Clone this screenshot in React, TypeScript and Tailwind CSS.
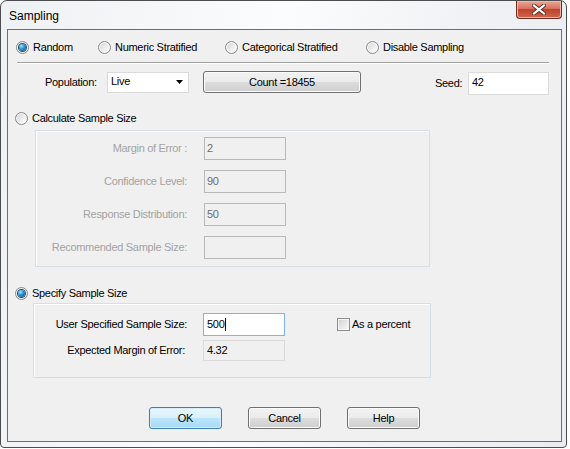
import React from 'react'

const font = "font-['Liberation_Sans',Arial,sans-serif]"

function Radio({ checked = false }: { checked?: boolean }) {
  return (
    <span className="flex h-[13px] w-[13px] shrink-0 items-center justify-center rounded-full border border-[#8a8a8a] bg-[linear-gradient(135deg,#d4d4d4,#f4f4f4_70%,#ffffff)] shadow-[inset_0_0_0_1px_#f8f8f8]">
      {checked && (
        <span className="h-[7px] w-[7px] rounded-full bg-[radial-gradient(circle_at_35%_30%,#9be3ff,#2a8fcf_45%,#0c4a78)] shadow-[0_0_0_1px_#1d4f74]" />
      )}
    </span>
  )
}

function RadioItem({ label, checked, w }: { label: string; checked?: boolean; w?: string }) {
  return (
    <div className={`flex h-[16px] items-center gap-[4px] ${w ?? ''}`}>
      <Radio checked={checked} />
      <span className="whitespace-nowrap">{label}</span>
    </div>
  )
}

function DisabledRow({ label, value }: { label: string; value: string }) {
  return (
    <div className="flex h-[23px] items-center">
      <span className="w-[152px] pr-[1px] text-right text-[#a3a3a3]">{label}</span>
      <div className="ml-[16px] flex h-[23px] w-[82px] items-start border border-[#b9b9b9] bg-[#f0f0f0] px-[2px] pt-[2px] text-[#6d6d6d]">
        {value}
      </div>
    </div>
  )
}

function WinButton({ label, primary }: { label: string; primary?: boolean }) {
  return (
    <button
      className={`flex h-[22px] w-[73px] items-center justify-center rounded-[3px] border ${
        primary
          ? 'border-[#3c7fb1] bg-[linear-gradient(#eaf6fd,#d9f0fc_50%,#bee6fd_50%,#a7d9f5)] shadow-[inset_0_0_0_1px_#d6eefb]'
          : 'border-[#707070] bg-[linear-gradient(#f2f2f2,#ebebeb_50%,#dddddd_50%,#cfcfcf)] shadow-[inset_0_0_0_1px_#fbfbfb]'
      }`}
    >
      {label}
    </button>
  )
}

export default function App() {
  return (
    <div className={`h-[449px] w-[570px] bg-white ${font} text-[11px] tracking-[-0.3px] text-black`}>
      <div className="flex h-[448px] w-[567px] flex-col rounded-t-[7px] rounded-b-[4px] border border-[#4d4d4d] bg-[linear-gradient(100deg,#eef1f4,#fbfcfd_45%,#f1f3f6_70%,#e9edf1)]">
        {/* title bar */}
        <div className="flex h-[28px] items-start justify-between">
          <span className="ml-[8px] mt-[6px] text-[12px] tracking-normal">Sampling</span>
          <div className="mr-[4px] flex h-[18px] w-[46px] items-center justify-center rounded-b-[4px] border border-t-0 border-[#6b2a20] bg-[linear-gradient(#e9a899,#d8705c_45%,#c0432c_50%,#d0654a)] shadow-[inset_0_0_0_1px_#f0b8a8]">
            <svg width="14" height="11" viewBox="0 0 14 11">
              <path d="M2 1.5 L12 9.5 M12 1.5 L2 9.5" stroke="#5a2a20" strokeWidth="4" strokeLinecap="square" />
              <path d="M2 1.5 L12 9.5 M12 1.5 L2 9.5" stroke="#ffffff" strokeWidth="2.2" strokeLinecap="square" />
            </svg>
          </div>
        </div>

        {/* client area */}
        <div className="ml-[6px] flex h-[413px] w-[555px] flex-col border border-[#6e6e6e] bg-[#f0f0f0]">
          {/* sampling method radios */}
          <div className="flex pl-[8px] pt-[9px]">
            <RadioItem label="Random" checked w="w-[82px]" />
            <RadioItem label="Numeric Stratified" w="w-[127px]" />
            <RadioItem label="Categorical Stratified" w="w-[141px]" />
            <RadioItem label="Disable Sampling" />
          </div>

          <div className="ml-[9px] mr-[12px] mt-[7px] border-t border-b border-t-[#a0a0a0] border-b-white" />

          {/* population row */}
          <div className="mt-[6px] flex h-[24px] items-center pl-[37px]">
            <span className="w-[62px]">Population:</span>
            <div className="flex h-[21px] w-[82px] items-center justify-between border border-[#dadada] bg-white pl-[3px] pr-[5px]">
              <span className="-mt-[2px]">Live</span>
              <svg width="7" height="4" viewBox="0 0 7 4">
                <path d="M0 0 H7 L3.5 4 Z" fill="#000" />
              </svg>
            </div>
            <div className="ml-[14px]">
              <button className="flex h-[22px] w-[158px] items-center justify-center rounded-[3px] border border-[#707070] bg-[linear-gradient(#f2f2f2,#ebebeb_50%,#dddddd_50%,#cfcfcf)] shadow-[inset_0_0_0_1px_#fbfbfb]">
                Count =18455
              </button>
            </div>
            <span className="ml-[74px] w-[33px] pt-[2px]">Seed:</span>
            <div className="mt-[2px] flex h-[23px] w-[81px] items-start border border-[#dcdcdc] bg-white px-[3px] pt-[1px]">
              42
            </div>
          </div>

          {/* calculate sample size */}
          <div className="mt-[16px] pl-[7px]">
            <RadioItem label="Calculate Sample Size" />
          </div>
          <div className="ml-[27px] mt-[4px] flex h-[137px] w-[395px] flex-col gap-[10px] border border-[#d5dfe5] pt-[6px] shadow-[inset_1px_1px_0_#ffffff]">
            <DisabledRow label="Margin of Error :" value="2" />
            <DisabledRow label="Confidence Level:" value="90" />
            <DisabledRow label="Response Distribution:" value="50" />
            <DisabledRow label="Recommended Sample Size:" value="" />
          </div>

          {/* specify sample size */}
          <div className="mt-[18px] pl-[7px]">
            <RadioItem label="Specify Sample Size" checked />
          </div>
          <div className="ml-[25px] mt-[2px] flex h-[75px] w-[398px] flex-col border border-[#d5dfe5] pt-[9px] shadow-[inset_1px_1px_0_#ffffff]">
            <div className="flex h-[23px] items-center">
              <span className="w-[154px] pr-[1px] text-right">User Specified Sample Size:</span>
              <div className="ml-[15px] flex h-[23px] w-[82px] items-center border border-[#7eb4ea] bg-white px-[3px]">
                500<span className="ml-[1px] h-[13px] w-px bg-black" />
              </div>
              <div className="ml-[52px] flex items-center gap-[2px]">
                <span className="h-[13px] w-[13px] border border-[#8f8f8f] bg-[linear-gradient(135deg,#cfcfcf,#eeeeee_70%,#f8f8f8)] shadow-[inset_0_0_0_1px_#f4f4f4]" />
                <span>As a percent</span>
              </div>
            </div>
            <div className="mt-[4px] flex h-[21px] items-center">
              <span className="w-[152px] pr-[1px] text-right">Expected Margin of Error:</span>
              <div className="ml-[17px] flex h-[21px] w-[82px] items-start border border-[#dadada] bg-[#f0f0f0] px-[3px] pt-[1px]">
                4.32
              </div>
            </div>
          </div>

          {/* dialog buttons */}
          <div className="mt-[29px] flex justify-center gap-[26px]">
            <WinButton label="OK" primary />
            <WinButton label="Cancel" />
            <WinButton label="Help" />
          </div>
        </div>
      </div>
    </div>
  )
}
